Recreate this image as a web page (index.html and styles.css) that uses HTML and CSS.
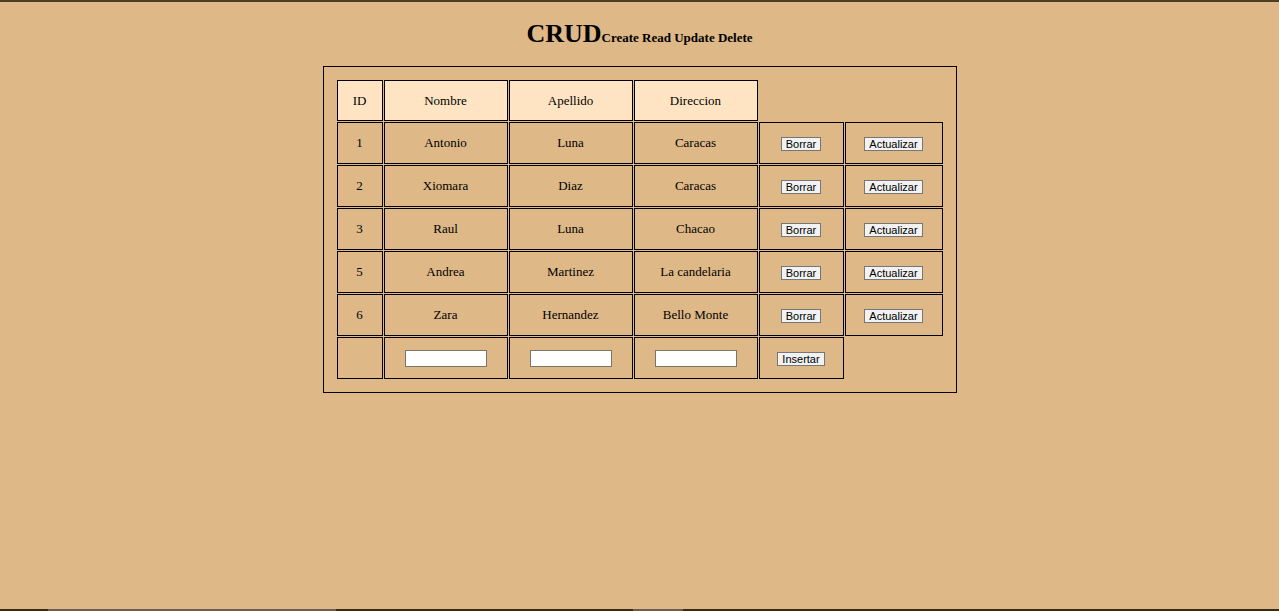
FILE: index.html
```html
<!DOCTYPE html>
<html lang="es">
<head>
<meta charset="utf-8">
<title>CRUD</title>
<link rel="stylesheet" href="styles.css">
</head>
<body>
<main class="page">
  <h1 class="title">CRUD<small class="subtitle">Create Read Update Delete</small></h1>
  <table class="grid">
    <tr class="head">
      <th class="c-id">ID</th>
      <th class="c-txt">Nombre</th>
      <th class="c-txt">Apellido</th>
      <th class="c-txt">Direccion</th>
    </tr>
    <tr>
      <td class="c-id">1</td><td class="c-txt">Antonio</td><td class="c-txt">Luna</td><td class="c-txt">Caracas</td>
      <td class="c-del"><button class="btn">Borrar</button></td><td class="c-upd"><button class="btn">Actualizar</button></td>
    </tr>
    <tr>
      <td class="c-id">2</td><td class="c-txt">Xiomara</td><td class="c-txt">Diaz</td><td class="c-txt">Caracas</td>
      <td class="c-del"><button class="btn">Borrar</button></td><td class="c-upd"><button class="btn">Actualizar</button></td>
    </tr>
    <tr>
      <td class="c-id">3</td><td class="c-txt">Raul</td><td class="c-txt">Luna</td><td class="c-txt">Chacao</td>
      <td class="c-del"><button class="btn">Borrar</button></td><td class="c-upd"><button class="btn">Actualizar</button></td>
    </tr>
    <tr>
      <td class="c-id">5</td><td class="c-txt">Andrea</td><td class="c-txt">Martinez</td><td class="c-txt">La candelaria</td>
      <td class="c-del"><button class="btn">Borrar</button></td><td class="c-upd"><button class="btn">Actualizar</button></td>
    </tr>
    <tr>
      <td class="c-id">6</td><td class="c-txt">Zara</td><td class="c-txt">Hernandez</td><td class="c-txt">Bello Monte</td>
      <td class="c-del"><button class="btn">Borrar</button></td><td class="c-upd"><button class="btn">Actualizar</button></td>
    </tr>
    <tr>
      <td class="c-id"></td>
      <td class="c-txt"><input class="field" type="text"></td>
      <td class="c-txt"><input class="field" type="text"></td>
      <td class="c-txt"><input class="field" type="text"></td>
      <td class="c-del"><button class="btn">Insertar</button></td>
    </tr>
  </table>
</main>
<div class="bottom-bar"><span class="seg seg-a"></span><span class="seg seg-b"></span></div>
</body>
</html>
```
FILE: styles.css
```css
html, body {
  margin: 0;
  padding: 0;
}
body {
  background: #DEB887;
  font-family: "Liberation Serif", "Times New Roman", serif;
  color: #000;
  min-height: 100vh;
  box-sizing: border-box;
  border-top: 2px solid #4e3c27;
  display: flex;
  flex-direction: column;
}
.page {
  display: flex;
  flex-direction: column;
  align-items: center;
}
.title {
  margin: 17px 0 0;
  font-size: 26px;
  line-height: 30px;
  font-weight: bold;
}
.subtitle {
  font-size: 13px;
  font-weight: bold;
}
.grid {
  margin-top: 13px;
  border: 1px solid #000;
  padding: 12px;
  border-spacing: 1px;
}
.grid th, .grid td {
  box-sizing: border-box;
  border: 1px solid #000;
  height: 42px;
  padding: 0;
  text-align: center;
  vertical-align: middle;
  font-size: 13px;
  font-weight: normal;
}
.grid .head th {
  background: #FFE4C4;
  height: 41px;
}
.c-id { width: 46px; }
.c-txt { width: 124px; }
.c-del { width: 85px; }
.c-upd { width: 98px; }
.btn {
  font-family: "Liberation Sans", Arial, sans-serif;
  font-size: 11px;
  line-height: 12px;
  padding: 0 4px;
  margin: 0;
  background: #f2f2f2;
  color: #000;
  border: 1px solid #767676;
  border-radius: 0;
  vertical-align: middle;
}
.field {
  box-sizing: border-box;
  width: 82px;
  height: 17px;
  margin: 0;
  padding: 0;
  border: 1px solid #7d7468;
  background: #fff;
  vertical-align: middle;
}
.bottom-bar {
  margin-top: auto;
  height: 2px;
  background: #3b2a12;
  display: flex;
}
.seg {
  height: 2px;
  background: #6e5d4b;
}
.seg-a { margin-left: 48px; width: 288px; }
.seg-b { margin-left: 297px; width: 50px; }
```
